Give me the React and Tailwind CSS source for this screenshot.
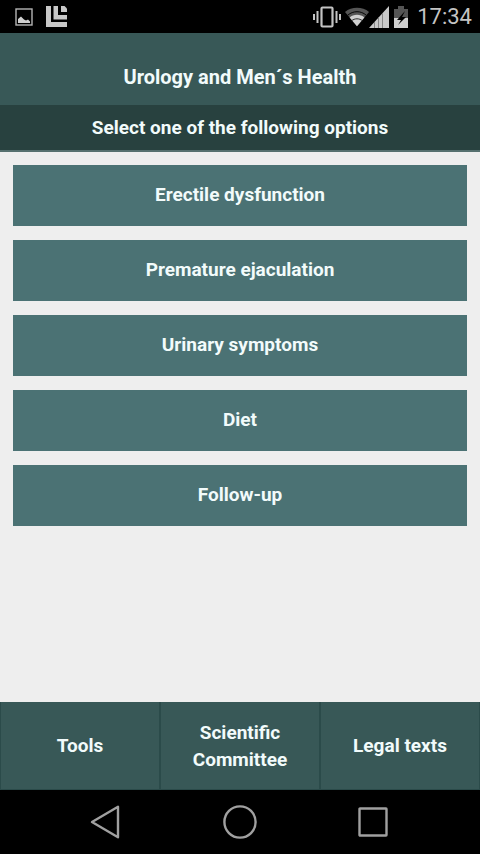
const options = [
  'Erectile dysfunction',
  'Premature ejaculation',
  'Urinary symptoms',
  'Diet',
  'Follow-up',
];

const tabs = ['Tools', 'Scientific Committee', 'Legal texts'];

function PictureIcon() {
  return (
    <svg width="18" height="18" viewBox="0 0 18 18" aria-hidden="true">
      <rect x="1" y="1" width="16" height="16" fill="none" stroke="#b4b4b4" strokeWidth="1.4" />
      <path d="M3 15v-4l3-2.5 3 3 2 1 2-1 2 2V15z" fill="#d0d0d0" />
    </svg>
  );
}

function CornersIcon() {
  return (
    <svg width="22" height="22" viewBox="0 0 22 22" fill="#c8c8c8" aria-hidden="true">
      <path d="M0 0h5v16h16v5H0z" />
      <path d="M7.500 0h4.500v9h9v4.500H7.500z" />
      <path d="M15 0h3.500L21 2.500V6h-6z" />
    </svg>
  );
}

function VibrateIcon() {
  return (
    <svg width="28" height="22" viewBox="0 0 28 22" fill="none" stroke="#c4c4c4" aria-hidden="true">
      <rect x="8.500" y="1.500" width="11" height="19" rx="1" strokeWidth="2.200" />
      <path d="M1 8v6M27 8v6M4.500 5v12M23.500 5v12" strokeWidth="2" />
    </svg>
  );
}

function WifiIcon() {
  return (
    <svg width="24" height="20" viewBox="0 0 26 20" aria-hidden="true">
      <path d="M13 20 0 4.500C7-1.500 19-1.500 26 4.500z" fill="#555555" />
      <path d="M3 8C9 3 17 3 23 8" fill="none" stroke="#000" strokeWidth="1" />
      <path d="M13 20 5 10.500c4-4 12-4 16 0z" fill="#d0d0d0" />
      <path d="M7 14.200c3.500-3 8.500-3 12 0" fill="none" stroke="#222" strokeWidth="1" />
    </svg>
  );
}

function SignalIcon() {
  return (
    <svg width="20" height="22" viewBox="0 0 20 22" aria-hidden="true">
      <path d="M0 22 20 0v22z" fill="#c8c8c8" />
      <path d="M5.500 16v6M9.500 11.500V22M13.500 7v15" stroke="#858585" strokeWidth="1" />
    </svg>
  );
}

function BatteryIcon() {
  return (
    <svg width="16" height="22" viewBox="0 0 16 22" aria-hidden="true">
      <path d="M1 3h4V0h6v3h4v9H1z" fill="#555555" />
      <path d="M1 12h14v10H1z" fill="#d0d0d0" />
      <path d="M12 5 4 14h4l-3 5 8-8H9z" fill="#000" />
    </svg>
  );
}

function StatusBar() {
  return (
    <div className="flex h-[33px] shrink-0 items-center justify-between bg-black pr-2 pl-[15px] font-normal">
      <div className="flex items-center gap-[13px]">
        <PictureIcon />
        <CornersIcon />
      </div>
      <div className="flex items-center">
        <VibrateIcon />
        <div className="ml-1 flex items-center">
          <WifiIcon />
          <SignalIcon />
        </div>
        <div className="mr-2 ml-1">
          <BatteryIcon />
        </div>
        <time className="text-[22px] leading-8 text-[#c4c4c4]">17:34</time>
      </div>
    </div>
  );
}

function NavBar() {
  const button = 'flex size-12 items-center justify-center';
  return (
    <div className="flex h-16 shrink-0 items-center justify-center gap-[85px] bg-black">
      <button type="button" aria-label="Back" className={button}>
        <svg width="36" height="36" viewBox="0 0 36 36" fill="none" stroke="#a0a0a0" strokeWidth="2.400" strokeLinejoin="round">
          <path d="M3 18 29 2.800v30.400z" />
        </svg>
      </button>
      <button type="button" aria-label="Home" className={button}>
        <svg width="36" height="36" viewBox="0 0 36 36" fill="none" stroke="#a0a0a0" strokeWidth="2.400">
          <circle cx="18" cy="18" r="15.600" />
        </svg>
      </button>
      <button type="button" aria-label="Recent apps" className={button}>
        <svg width="36" height="36" viewBox="0 0 36 36" fill="none" stroke="#a0a0a0" strokeWidth="2.400" strokeLinejoin="round">
          <rect x="4.500" y="4.500" width="27" height="27" rx="0.500" />
        </svg>
      </button>
    </div>
  );
}

export default function App() {
  return (
    <div className="flex min-h-screen flex-col bg-[#eeeeee] font-['Roboto',sans-serif] text-[19px] font-bold text-[#f2fbfb]">
      <StatusBar />
      <header className="text-center">
        <h1 className="bg-[#385857] pt-[30px] pb-[14px] text-[20px] leading-7">Urology and Men´s Health</h1>
        <h2 className="border-b-2 border-[#56706f] bg-[#28413f] pt-[10px] pb-[9px] leading-[26px]">
          Select one of the following options
        </h2>
      </header>
      <main className="flex flex-1 flex-col gap-[14px] px-[13px] pt-[13px]">
        {options.map((label) => (
          <button key={label} type="button" className="h-[61px] bg-[#4b7274]">
            {label}
          </button>
        ))}
      </main>
      <nav className="grid h-[88px] shrink-0 grid-cols-3 bg-[#385857]">
        {tabs.map((label) => (
          <button
            key={label}
            type="button"
            className="border-x border-b border-[#2b4b4a] px-6 leading-[27px]"
          >
            {label}
          </button>
        ))}
      </nav>
      <NavBar />
    </div>
  );
}
